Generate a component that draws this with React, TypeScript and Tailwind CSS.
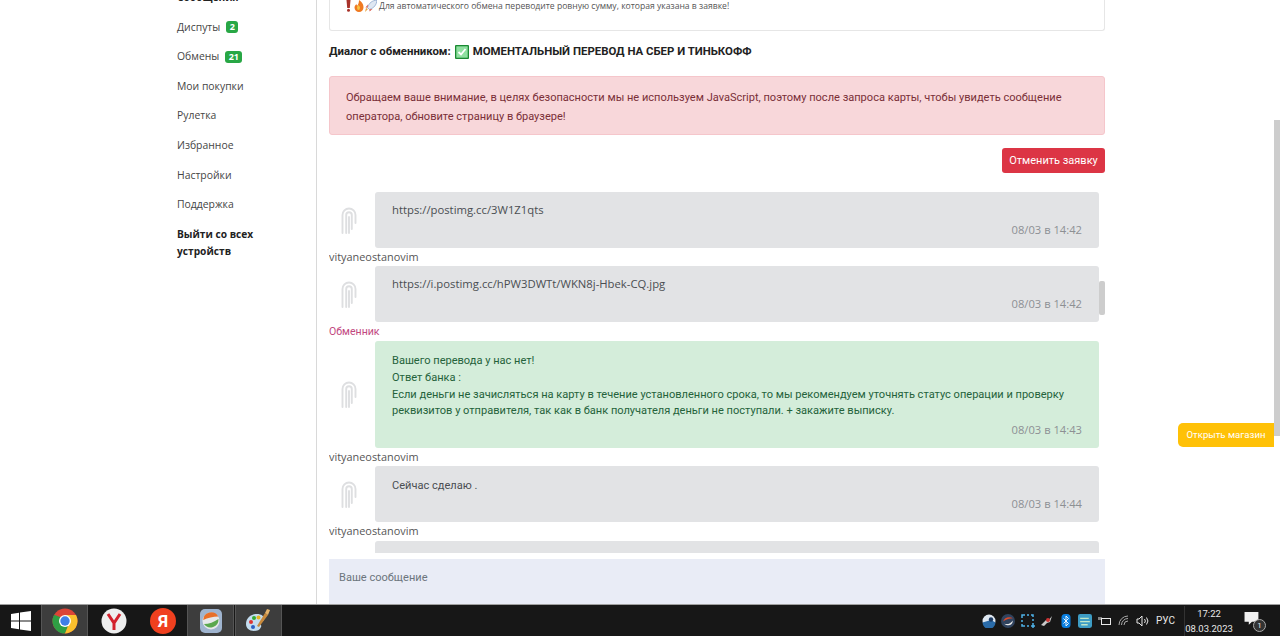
const CONTENT_FONT = "font-['Roboto',sans-serif]"

function Avatar() {
  return (
    <svg width="16" height="27" viewBox="0 0 16 27" fill="none" stroke="#dedfe1" strokeWidth="1.900" strokeLinecap="round">
      <path d="M1.500 26V8a6.500 6.500 0 0 1 13 0v8" />
      <path d="M5.200 26V8a2.800 2.800 0 0 1 5.600 0v14" />
      <path d="M8 10v16" />
    </svg>
  )
}

function Message({ author, tone, height, time, lines, latin }: {
  author?: string
  tone: 'gray' | 'green'
  height: string
  time?: string
  lines: string[]
  latin?: boolean
}) {
  const green = tone === 'green'
  return (
    <div className="shrink-0">
      <div className="flex">
        <div className="w-[46px] flex justify-center items-center pr-[6px]">
          <Avatar />
        </div>
        <div className={`flex-1 flex flex-col ${height} rounded-[3px] px-[17px] ${latin ? 'pt-[10px]' : 'pt-[12px]'} pb-[10px] ${green ? 'bg-[#d4edda] text-[#24623a]' : 'bg-[#e2e3e5] text-[#4a4e52]'}`}>
          {lines.map(l => (
            <div key={l} className={`leading-[16.8px] ${latin ? "text-[11.3px] font-['Open_Sans',sans-serif]" : 'text-[11.05px]'}`}>{l}</div>
          ))}
          {time && <div className="mt-auto text-right text-[11.2px] leading-[17px] font-['Open_Sans',sans-serif] text-[#8d9094]">{time}</div>}
        </div>
      </div>
      {author && (
        <div className={author === 'Обменник' ? 'text-[#c2487f] text-[10.6px] leading-[17px] pt-[1px]' : "text-[#555] text-[10.9px] leading-[18px] font-['Open_Sans',sans-serif]"}>{author}</div>
      )}
    </div>
  )
}

function Sidebar() {
  const items = ['Мои покупки', 'Рулетка', 'Избранное', 'Настройки', 'Поддержка']
  return (
    <aside className="w-[317px] shrink-0 border-r border-[#d9d9d9] pl-[177px] -mt-[11px] flex flex-col gap-[12.6px] font-['Open_Sans',sans-serif] text-[10.4px] leading-[17px] text-[#454545]">
      <div className="font-bold text-[10.2px] text-[#222]">Сообщения</div>
      <div className="flex items-center gap-[6px]">Диспуты
        <span className="w-[12px] bg-[#28a745] text-white text-center text-[9px] font-bold leading-[12px] rounded-[3px]">2</span>
      </div>
      <div className="flex items-center gap-[6px]">Обмены
        <span className="w-[17px] bg-[#28a745] text-white text-center text-[9px] font-bold leading-[12px] rounded-[3px]">21</span>
      </div>
      {items.map(i => <div key={i}>{i}</div>)}
      <div className="font-bold text-[10.2px] text-[#222]">Выйти со всех<br />устройств</div>
    </aside>
  )
}

function TrayIcon({ children }: { children: React.ReactNode }) {
  return <div className="w-[19.3px] flex justify-center">{children}</div>
}

function Taskbar() {
  return (
    <div className="h-[32px] shrink-0 bg-[#171717] border-t border-[#a0a0a0] flex items-center text-[#e8e8e8] font-['Roboto',sans-serif]">
      <div className="w-[41px] flex justify-center">
        <svg width="20" height="20" viewBox="0 0 20 20" fill="#fff"><path d="M0 3l8-1.2V9.500H0zM9 1.600L20 0v9.500H9zM0 10.500h8v7.700L0 17zM9 10.500h11V20L9 18.400z" /></svg>
      </div>
      <div className="w-[47px] h-full bg-[#3d3d3d] border-x border-[#555] flex justify-center items-center">
        <svg width="26" height="26" viewBox="0 0 26 26">
          <circle cx="13" cy="13" r="12.500" fill="#dc4437" />
          <path d="M2.200 6.700A12.500 12.500 0 0 0 13 25.500L18 13z" fill="#2f9e44" />
          <path d="M13 7h11A12.500 12.500 0 0 1 13 25.500L18 13z" fill="#fbc02d" />
          <circle cx="13" cy="13" r="6" fill="#fff" />
          <circle cx="13" cy="13" r="4.700" fill="#3f7fe8" />
        </svg>
      </div>
      <div className="w-[51px] flex justify-center">
        <svg width="26" height="26" viewBox="0 0 26 26">
          <circle cx="13" cy="13" r="12.500" fill="#eeeeee" />
          <path d="M7 6l6 9 6-9M13 15v7" fill="none" stroke="#d3202c" strokeWidth="3" />
        </svg>
      </div>
      <div className="w-[48px] flex justify-center">
        <div className="w-[26px] h-[26px] rounded-full bg-[#f0401f] text-white text-[17px] font-bold leading-[26px] text-center">Я</div>
      </div>
      <div className="w-[47px] h-full bg-[#3d3d3d] border-x border-[#555] flex justify-center items-center">
        <svg width="22" height="24" viewBox="0 0 22 24">
          <rect width="22" height="24" rx="5" fill="#9fb4cf" />
          <circle cx="11" cy="12" r="8.500" fill="#e6e8ea" />
          <path d="M3.200 11a8 8 0 0 1 15-3.500C13 7.500 8 9 3.200 11z" fill="#e8702a" />
          <path d="M4 15c5 0 10-2 14.500-5a8 8 0 0 1-14.500 5z" fill="#5aa84f" />
        </svg>
      </div>
      <div className="w-[47px] h-full ml-[1px] bg-[#3d3d3d] border-x border-[#555] flex justify-center items-center">
        <svg width="27" height="25" viewBox="0 0 27 25">
          <path d="M1 16c0-6 5-10 11-10 5 0 8 3 7 6-1 2-4 1-4 3 0 2 2 2 1 4-1 3-4 4-7 4-5 0-8-3-8-7z" fill="#c3dcef" />
          <circle cx="6" cy="14" r="2" fill="#d33" />
          <circle cx="9" cy="10" r="2" fill="#3a3" />
          <circle cx="13.500" cy="9.500" r="2" fill="#e6b422" />
          <circle cx="8" cy="19" r="2" fill="#2b5fc4" />
          <path d="M20 5l-8 13 2 1 9-12z" fill="#c98a3c" />
          <path d="M20 5l2-4 3 1-2 5z" fill="#e6b36a" />
        </svg>
      </div>
      <div className="flex-1" />
      <div className="flex items-center">
        <TrayIcon><svg width="14" height="14" viewBox="0 0 14 14"><circle cx="7" cy="7" r="6.500" fill="#dfe8f2" /><path d="M.5 8.500a6.500 6.500 0 0 0 13 0L9 6z" fill="#2a6ba8" /><circle cx="9" cy="5.500" r="2.200" fill="#1d3b63" /></svg></TrayIcon>
        <TrayIcon><svg width="14" height="14" viewBox="0 0 13 13"><circle cx="6.500" cy="6.500" r="6.500" fill="#30435e" /><path d="M2 7c1-4 6-5 9-3-3 0-6 1-9 3z" fill="#dd4a2a" /><path d="M3 9c3 1 6 0 8-3 0 4-4 6-8 3z" fill="#e8e8e8" /></svg></TrayIcon>
        <TrayIcon><svg width="14" height="14" viewBox="0 0 14 14" fill="none" stroke="#4fb3e8" strokeWidth="1.500"><path d="M1 4V1h3M6 1h2M10 1h2v2M12 5v2M12 9v1M1 6v2M1 10v2h3M6 12h2" /><path d="M10 12h4M12 10v4" /></svg></TrayIcon>
        <TrayIcon><svg width="13" height="12" viewBox="0 0 13 12"><path d="M1 10l5-5 2 1 4-5-2 6-3 1-3 3z" fill="#c9c9c9" /><circle cx="8" cy="5" r="2" fill="#c33" /></svg></TrayIcon>
        <TrayIcon><svg width="10" height="14" viewBox="0 0 9 14"><rect width="9" height="14" rx="3.500" fill="#0a7fe0" /><path d="M2 4.500l5 5-2.500 2.500V2l2.500 2.500-5 5" fill="none" stroke="#fff" strokeWidth="0.900" /></svg></TrayIcon>
        <TrayIcon><svg width="14" height="14" viewBox="0 0 13 13"><rect width="13" height="13" rx="2" fill="#3d9cc4" /><path d="M2 4h8M2 7h9M3 10h6" stroke="#bfe6c8" strokeWidth="1.200" /></svg></TrayIcon>
        <TrayIcon><svg width="13" height="10" viewBox="0 0 13 10" fill="none" stroke="#e8e8e8"><rect x="3.500" y="2.500" width="9" height="6" /><path d="M1 1v3M3 1v3" /></svg></TrayIcon>
        <TrayIcon><svg width="12" height="11" viewBox="0 0 12 11" fill="none" stroke="#aaa"><path d="M1 10a9 9 0 0 1 9-9M3.500 10a6.500 6.500 0 0 1 6.500-6.500M6 10a4 4 0 0 1 4-4" /></svg></TrayIcon>
        <TrayIcon><svg width="14" height="12" viewBox="0 0 14 12" fill="none" stroke="#e8e8e8"><path d="M1 4h2l3-3v10L3 8H1zM8.500 4a3 3 0 0 1 0 4M10.500 2.500a5.500 5.500 0 0 1 0 7" /></svg></TrayIcon>
        <span className="text-[10px] ml-[3px]">РУС</span>
      </div>
      <div className="w-[49px] ml-[9px] text-center text-[9.500px] leading-[15px] border-l border-[#333]">
        <div>17:22</div>
        <div>08.03.2023</div>
      </div>
      <div className="w-[47px] flex justify-center relative">
        <svg width="18" height="16" viewBox="0 0 16 15" className="-translate-x-[5px] -translate-y-[2px]"><path d="M1 1h13v9H8l-3 3v-3H1z" fill="#f0f0f0" /></svg>
        <span className="absolute left-[20px] top-[6px] w-[13px] h-[13px] rounded-full bg-[#333] border border-[#aaa] text-[8px] leading-[11px] text-center">1</span>
      </div>
    </div>
  )
}

export default function App() {
  return (
    <div className="h-[636px] w-[1280px] overflow-hidden flex flex-col bg-white">
      <div className="h-[604px] flex relative overflow-hidden">
        <Sidebar />
        <main className={`flex-1 min-w-0 pl-[12px] pr-[175px] ${CONTENT_FONT}`}>
          {/* top card, cut by the viewport */}
          <div className="h-[31px] border-x border-b border-[#e6e6e6] rounded-b-[3px] pl-[16px] flex items-start gap-[2px] text-[8.600px] leading-[12px] text-[#555] font-['Open_Sans',sans-serif]">
            <svg width="31" height="12" viewBox="0 0 31 12" className="shrink-0">
              <path d="M0.500 0h4l-.7 8H1.200z" fill="#a8322a" />
              <circle cx="2.500" cy="10.300" r="1.500" fill="#a8322a" />
              <path d="M13 0c4 3 4.500 5 4.500 7.500a4.500 4.500 0 0 1-9 0c0-1.500 1-2.500 2-3.500 0 1 .5 1.500 1 1.500 1-1.500 1.500-3.500 1.500-5.500z" fill="#ef7a22" />
              <path d="M14 7.500a1.500 2.500 0 0 1-3 0c0-1 1-2 1.500-2.500.5.800 1.500 1.500 1.500 2.500z" fill="#f7c244" />
              <path d="M31 0c-5 .5-8 3-9.500 7.500l2 2C28 8 30.500 5 31 0z" fill="#dfe7f2" stroke="#6f8fc0" strokeWidth="0.600" />
              <path d="M21.500 7.500l-2 0 2.500-3zM23.500 9.500l0 2 3-2.500z" fill="#d9503f" />
              <path d="M22 9l-3 3 1-4z" fill="#e8a33c" />
            </svg>
            <span>Для автоматического обмена переводите ровную сумму, которая указана в заявке!</span>
          </div>

          <div className="mt-[12px] h-[17px] flex items-center gap-[4px] text-[11.400px] font-bold text-[#222]">
            <span>Диалог с обменником:</span>
            <svg width="14" height="14" viewBox="0 0 14 14"><rect width="14" height="14" rx="1" fill="#1a8a32" /><rect x="1.300" y="1.300" width="11.400" height="11.400" fill="#8fe0a0" /><path d="M3.500 7l2.500 2.500L10.500 4" fill="none" stroke="#fff" strokeWidth="1.800" /></svg>
            <span>МОМЕНТАЛЬНЫЙ ПЕРЕВОД НА СБЕР И ТИНЬКОФФ</span>
          </div>

          <div className="mt-[16px] h-[59px] rounded-[3px] bg-[#f8d7da] border border-[#f5c6cb] px-[16px] pt-[11px] text-[11.050px] leading-[19px] text-[#7a2f38]">
            Обращаем ваше внимание, в целях безопасности мы не используем JavaScript, поэтому после запроса карты, чтобы увидеть сообщение оператора, обновите страницу в браузере!
          </div>

          <div className="mt-[13px] flex justify-end">
            <button className="h-[25px] w-[103px] pt-[1px] rounded-[3px] bg-[#dc3545] text-white text-[11px]">Отменить заявку</button>
          </div>

          <div className="mt-[19px] h-[361px] pr-[6px] overflow-hidden relative flex flex-col">
            <Message height="h-[56px]" tone="gray" latin time="08/03 в 14:42" lines={['https://postimg.cc/3W1Z1qts']} author="vityaneostanovim" />
            <Message height="h-[56px]" tone="gray" latin time="08/03 в 14:42" lines={['https://i.postimg.cc/hPW3DWTt/WKN8j-Hbek-CQ.jpg']} author="Обменник" />
            <div className="h-[1px] shrink-0" />
            <Message height="h-[107px]" tone="green" time="08/03 в 14:43" lines={['Вашего перевода у нас нет!', 'Ответ банка :', 'Если деньги не зачисляться на карту в течение установленного срока, то мы рекомендуем уточнять статус операции и проверку', 'реквизитов у отправителя, так как в банк получателя деньги не поступали. + закажите выписку.']} author="vityaneostanovim" />
            <Message height="h-[56px]" tone="gray" time="08/03 в 14:44" lines={['Сейчас сделаю .']} author="vityaneostanovim" />
            <div className="pl-[46px] pt-[1px]"><div className="h-[12px] rounded-t-[3px] bg-[#e2e3e5]" /></div>
            <div className="absolute right-0 top-[89px] w-[6px] h-[34px] rounded-[2px] bg-[#cdcdcd]" />
          </div>

          <div className="mt-[6px] h-[50px] bg-[#e9ecf6] pl-[10px] pt-[12px] text-[11.050px] leading-[14px] text-[#6c757d]">Ваше сообщение</div>
        </main>

        <div className="absolute right-0 top-[120px] w-[6px] h-[316px] bg-[#cdcdcd]" />
        <button className={`absolute right-[6px] top-[423px] w-[96px] h-[24px] rounded-l-[5px] bg-[#ffc107] text-white text-[9.600px] ${CONTENT_FONT}`}>Открыть магазин</button>
      </div>
      <Taskbar />
    </div>
  )
}
